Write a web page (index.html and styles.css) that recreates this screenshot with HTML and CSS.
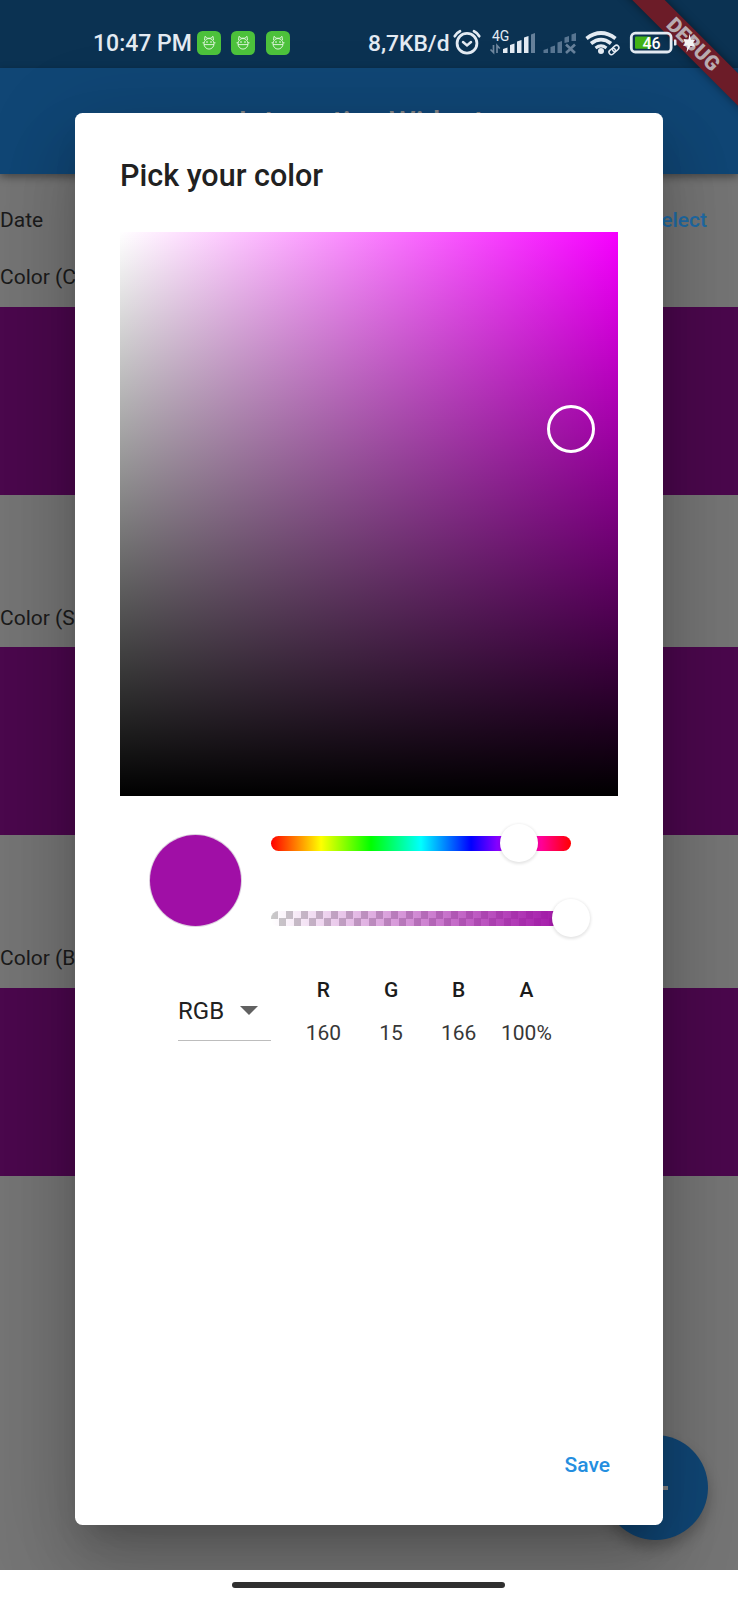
FILE: index.html
```html
<!DOCTYPE html>
<html lang="en">
<head>
<meta charset="utf-8">
<title>Interactive Widgets</title>
<link rel="stylesheet" href="styles.css">
</head>
<body>
<div class="phone">
  <div class="screen">
    <header class="status"></header>
    <div class="appbar">Interactive Widgets</div>
    <main class="list">
      <div class="row date-row"><span>Date</span><span class="select">Select</span></div>
      <div class="row first">Color (Color Picker)</div>
      <div class="band"></div>
      <div class="row">Color (Slide Picker)</div>
      <div class="band"></div>
      <div class="row">Color (Block Picker)</div>
      <div class="band"></div>
    </main>
    <div class="fab"><svg width="28" height="28" viewBox="0 0 28 28"><path d="M14 1v26M1 14h25" stroke="#858585" stroke-width="4"/></svg></div>

    <section class="dialog">
      <h1>Pick your color</h1>
      <div class="area"><span class="ring"></span></div>
      <div class="controls">
        <div class="swatch"></div>
        <div class="sliders">
          <div class="track hue"><span class="knob hue-knob"></span></div>
          <div class="track alpha"><span class="knob alpha-knob"></span></div>
        </div>
      </div>
      <div class="values">
        <div class="mode"><span>RGB</span><svg width="18" height="9" viewBox="0 0 18 9"><path d="M0 0h18l-9 9z" fill="#616161"/></svg></div>
        <div class="channels">
          <div><b>R</b><span>160</span></div>
          <div><b>G</b><span>15</span></div>
          <div><b>B</b><span>166</span></div>
          <div><b>A</b><span>100%</span></div>
        </div>
      </div>
      <div class="save">Save</div>
    </section>

    <div class="debug">DEBUG</div>

    <div class="status-content">
      <span class="time">10:47 PM</span>
      <span class="notes">
        <svg class="note" viewBox="0 0 24 24"><use href="#bot"/></svg>
        <svg class="note" viewBox="0 0 24 24"><use href="#bot"/></svg>
        <svg class="note" viewBox="0 0 24 24"><use href="#bot"/></svg>
      </span>
      <span class="speed">8,7KB/d</span>
      <svg class="icons" width="232" height="32" viewBox="450 27 232 32">
        <g fill="none" stroke="#e3eaf2" stroke-width="2.8" stroke-linecap="round">
          <circle cx="467" cy="43.300" r="9.900"/>
          <path d="M454.800 36.200q1.800-3.500 5.200-5M479.200 36.200q-1.800-3.500-5.200-5"/>
          <path d="M463 42l4 3.400 4-3.400" stroke-width="2.500"/>
        </g>
        <text x="492" y="41" class="net">4G</text>
        <path d="M493.500 45v7.500l-3-3M497 53v-7.500l2.800 3" fill="none" stroke="#6f879f" stroke-width="1.700"/>
        <path d="M503 53v-4l4.500-1.500v5.500zM510 53v-8l4.500-1.500v9.500zM517 53v-11.500l4.500-1.500v13zM524 53v-15.500l4.500-1.500v17z" fill="#e3eaf2"/>
        <path d="M531 53v-18.500l4-1.500v20z" fill="#66809a"/>
        <path d="M543.500 53v-3l4.500-1.500v4.500zM550.500 53v-6l4.500-1.500v7.500zM557.500 53v-10.500l4.500-1.500v12zM564.500 43v-5.500l4.500-1.500v6zM571.500 41v-6.500l4.500-1.500v8z" fill="#587591"/>
        <path d="M566 44.500l9 8.500M575 44.500l-9 8.500" stroke="#66809a" stroke-width="2.600"/>
        <g fill="none" stroke="#e3eaf2" stroke-width="3.700">
          <path d="M586.500 38.500q14.500-11 29 0"/>
          <path d="M591 43.500q10-7.800 20 0"/>
          <path d="M595.500 48q5.500-4.200 11 0" stroke-width="3"/>
        </g>
        <circle cx="601" cy="51" r="3" fill="#e3eaf2"/>
        <g fill="none" stroke="#e3eaf2" stroke-width="1.500" transform="rotate(-42 614 50)">
          <rect x="608.200" y="47.500" width="7" height="4.800" rx="2.400"/>
          <rect x="612.800" y="47.500" width="7" height="4.800" rx="2.400"/>
        </g>
        <rect x="631.300" y="33.200" width="39.800" height="18.800" rx="4" fill="none" stroke="#e3eaf2" stroke-width="2.800"/>
        <rect x="635" y="36.500" width="16" height="12.200" rx="1" fill="#43b216"/>
        <path d="M674 39.500h1.300q1.200 0 1.200 1.200v3.600q0 1.200-1.200 1.200h-1.300z" fill="#e3eaf2"/>
        <text x="651.500" y="48.700" text-anchor="middle" class="pct">46</text>
      </svg>
      <svg class="bolt" width="14" height="22" viewBox="0 0 14 22"><path d="M7.500 1.500L6.500 7.500L1.500 7L3 11.500L1 14L5.500 13.500L4.500 20.500L8.500 14L13 14.500L11 10.500L13.500 7.500L9 8z" fill="#f4f4f4"/></svg>
    </div>
  </div>
  <footer class="nav"><span></span></footer>
</div>
<svg width="0" height="0" class="defs"><defs>
  <g id="bot"><rect width="24" height="24" rx="5.500" fill="#4cc13b"/>
  <g fill="none" stroke="#e9f8e6" stroke-width=".9" stroke-linejoin="round"><path d="M7.500 9l.5-3.700L10 7.200h4l2-1.900.5 3.700"/><ellipse cx="12" cy="12.800" rx="5" ry="5.300"/><path d="M7 13.600h10M5.500 11.800H7M17 11.800h1.500"/></g>
  <circle cx="10" cy="11" r=".8" fill="#fff"/><circle cx="14" cy="11" r=".8" fill="#fff"/></g>
</defs></svg>
</body>
</html>
```
FILE: styles.css
```css
* { box-sizing: border-box; }
body { margin: 0; font-family: Roboto, "Liberation Sans", sans-serif; font-size: 21px; color: #1b1b1b; }
.phone { width: 738px; height: 1600px; display: flex; flex-direction: column; overflow: hidden; }
.screen { position: relative; height: 1570px; background: #757575; overflow: hidden; }
.defs { position: absolute; }

.status { height: 68px; background: #0b3252; }
.appbar {
  position: relative;
  height: 106px;
  background: #104675;
  box-shadow: 0 3px 8px rgba(0, 0, 0, .4);
  display: flex; align-items: center; justify-content: center;
  font-size: 30.300px; font-weight: 500; color: #858585;
}
.list { display: flex; flex-direction: column; }
.row { height: 59px; display: flex; align-items: center; white-space: nowrap; }
.row.first { height: 41px; padding-bottom: 20px; }
.date-row { height: 92px; justify-content: space-between; padding-right: 31px; }
.select { color: #1e6ba6; font-weight: 500; }
.band { height: 188px; background: #4b084d; }
.band + .row { margin-top: 93.300px; }
.fab {
  position: absolute; left: 603px; top: 1435px; width: 105px; height: 105px;
  border-radius: 50%; background: #104675;
  display: flex; align-items: center; justify-content: center;
  box-shadow: 0 8px 14px rgba(0, 0, 0, .25);
}

.dialog {
  position: absolute; left: 75px; top: 113.400px; width: 588px; height: 1411.600px;
  padding: 0 45px; border-radius: 7.500px; background: #fff;
  box-shadow: 0 20px 30px -13px rgba(0, 0, 0, .2), 0 45px 71px 6px rgba(0, 0, 0, .14), 0 17px 86px 15px rgba(0, 0, 0, .1);
  display: flex; flex-direction: column;
}
.dialog h1 { margin: 0; height: 118.600px; padding-top: 45px; line-height: 35px; font-size: 30.500px; font-weight: 500; color: #212121; }
.area {
  position: relative; height: 564px;
  background: linear-gradient(to bottom, transparent, #000), linear-gradient(to right, #fff, #f600ff);
}
.ring { position: absolute; left: 427px; top: 173px; width: 48px; height: 48px; border: 3px solid #fff; border-radius: 50%; }
.controls { display: flex; height: 170px; padding: 39px 47px 0 30px; gap: 30px; }
.swatch { width: 91px; height: 91px; border-radius: 50%; background: #a00fa6; box-shadow: 0 0 0 1px #ddd0df; }
.sliders { flex: 1; padding-top: 1px; display: flex; flex-direction: column; gap: 60px; }
.track { position: relative; height: 15px; border-radius: 7.500px; }
.hue { background: linear-gradient(to right, #f00, #ff0 16.700%, #0f0 33.300%, #0ff 50%, #00f 66.700%, #f0f 83.300%, #f00); }
.alpha {
  background:
    linear-gradient(to right, rgba(160, 15, 166, 0), #a00fa6),
    conic-gradient(#fff 25%, #c9c9c9 0 50%, #fff 0 75%, #c9c9c9 0) 0 0 / 15px 15px;
}
.knob { position: absolute; top: -12px; width: 38px; height: 38px; border-radius: 50%; background: #fff; box-shadow: 0 1px 3px 1px rgba(0, 0, 0, .1); }
.hue-knob { left: 229px; }
.alpha-knob { left: 281px; }

.values { display: flex; padding-left: 58px; height: 90px; }
.mode {
  width: 93px; height: 75px; padding: 16px 13px 0 0; border-bottom: 1px solid #bdbdbd;
  display: flex; align-items: center; justify-content: space-between; font-size: 24px; color: #212121;
}
.channels { display: flex; padding: 12.500px 0 0 18.500px; }
.channels div { width: 67.700px; display: flex; flex-direction: column; align-items: center; gap: 18px; line-height: 25px; }
.channels b { font-weight: 500; }
.channels span { color: #373737; }
.save { margin-top: auto; padding: 0 8px 46.500px 0; text-align: right; line-height: 25px; font-weight: 500; color: #248edf; }

.debug {
  position: absolute; left: 568px; top: 33px; width: 250px; height: 23px;
  transform: rotate(45deg); background: #6c1c28;
  box-shadow: 0 0 10px rgba(0, 0, 0, .45);
  text-align: center; line-height: 23px; font-size: 20.500px; font-weight: 900; color: #b8abb0;
}
.status-content {
  position: absolute; left: 0; top: 0; width: 738px; height: 86px; padding-left: 93px;
  display: flex; align-items: center; color: #e3eaf2; font-size: 23px; font-weight: 500; white-space: nowrap;
}
.time { width: 104px; }
.notes { width: 171px; display: flex; gap: 10.300px; }
.note { width: 24px; height: 24px; }
.speed { width: 82px; font-size: 22.800px; }
.icons { flex: none; }
.bolt { flex: none; }
.net { font-size: 14px; font-weight: 400; fill: #e3eaf2; }
.pct { font-size: 16px; font-weight: 500; fill: #fff; }
.nav { height: 30px; background: #fff; display: flex; justify-content: center; padding: 11.500px 1px 0 0; }
.nav span { width: 273px; height: 6.500px; border-radius: 4px; background: #303030; }
```
